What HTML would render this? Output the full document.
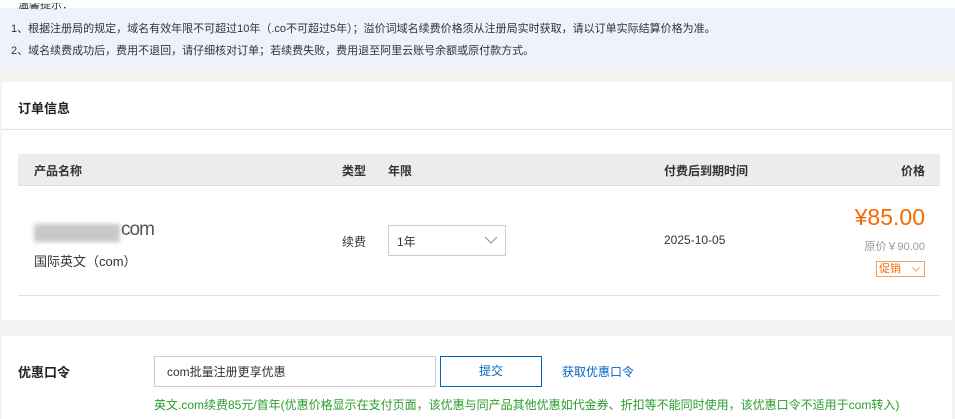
<!DOCTYPE html>
<html><head><meta charset="utf-8"><style>
*{margin:0;padding:0;box-sizing:border-box}
body{width:955px;height:419px;overflow:hidden;background:#f3f3f3;font-family:"Liberation Sans","Noto Sans CJK SC",sans-serif;font-size:12px;color:#333;position:relative}
.a{position:absolute;white-space:nowrap}
</style></head><body>
<div class="a" style="left:0;top:0;width:955px;height:8px;background:#fff"></div>
<div class="a" style="left:0;top:8px;width:955px;height:60px;background:#eef2fb"></div>
<div class="a" style="left:18px;top:3px;font-size:11px;color:#333;height:9px;overflow:hidden;line-height:5px">温馨提示：</div>
<div class="a" style="left:11px;top:20px;font-size:11px;color:#333">1、根据注册局的规定，域名有效年限不可超过10年（.co不可超过5年）；溢价词域名续费价格须从注册局实时获取，请以订单实际结算价格为准。</div>
<div class="a" style="left:11px;top:42px;font-size:11px;color:#333">2、域名续费成功后，费用不退回，请仔细核对订单；若续费失败，费用退至阿里云账号余额或原付款方式。</div>
<div class="a" style="left:2px;top:82px;width:950px;height:238px;background:#fff"></div>
<div class="a" style="left:18px;top:98px;font-size:13px;font-weight:bold;color:#222">订单信息</div>
<div class="a" style="left:2px;top:129px;width:950px;height:1px;background:#e0e0e0"></div>
<div class="a" style="left:18px;top:154px;width:922px;height:32px;background:#ececec;border-bottom:1px solid #ddd"></div>
<div class="a" style="left:34px;top:162px;font-weight:bold;color:#333">产品名称</div>
<div class="a" style="left:342px;top:162px;font-weight:bold">类型</div>
<div class="a" style="left:388px;top:162px;font-weight:bold">年限</div>
<div class="a" style="left:664px;top:162px;font-weight:bold">付费后到期时间</div>
<div class="a" style="right:30px;top:162px;font-weight:bold">价格</div>
<div class="a" style="left:34px;top:224px;width:86px;height:18px;background:#c8c8c8;filter:blur(2px)"></div>
<div class="a" style="left:121px;top:219px;font-size:19px;color:#555;letter-spacing:-1px">com</div>
<div class="a" style="left:34px;top:251px;font-size:13px">国际英文（com）</div>
<div class="a" style="left:342px;top:233px">续费</div>
<div class="a" style="left:388px;top:225px;width:118px;height:31px;border:1px solid #ccc"></div>
<div class="a" style="left:397px;top:233px">1年</div>
<svg class="a" style="left:484px;top:236px" width="14" height="9"><path d="M1 1 L7 7 L13 1" fill="none" stroke="#999" stroke-width="1.2"/></svg>
<div class="a" style="left:664px;top:233px">2025-10-05</div>
<div class="a" style="right:30px;top:204px;font-size:23px;color:#f56a00">¥85.00</div>
<div class="a" style="right:30px;top:238px;font-size:11px;color:#999">原价￥90.00</div>
<div class="a" style="left:876px;top:261px;width:49px;height:16px;border:1px solid #f0a060;color:#f56a00;font-size:11px;line-height:14px;padding-left:2px">促销<svg style="position:absolute;left:35px;top:5px" width="8" height="5"><path d="M0.5 0.5 L4 4 L7.5 0.5" fill="none" stroke="#f0a060"/></svg></div>
<div class="a" style="left:18px;top:295px;width:922px;height:1px;background:#e3e3e3"></div>
<div class="a" style="left:2px;top:336px;width:950px;height:83px;background:#fff"></div>
<div class="a" style="left:18px;top:362px;font-size:13px;font-weight:bold;color:#222">优惠口令</div>
<div class="a" style="left:154px;top:356px;width:282px;height:31px;border:1px solid #ccc;padding:8px 12px;font-size:12px;line-height:14px">com批量注册更享优惠</div>
<div class="a" style="left:440px;top:356px;width:102px;height:31px;border:1px solid #0064c8;color:#0064c8;text-align:center;line-height:29px">提交</div>
<div class="a" style="left:562px;top:363px;color:#0064c8">获取优惠口令</div>
<div class="a" style="left:154px;top:396px;color:#2a9d2a">英文.com续费85元/首年(优惠价格显示在支付页面，该优惠与同产品其他优惠如代金券、折扣等不能同时使用，该优惠口令不适用于com转入)</div>
</body></html>
